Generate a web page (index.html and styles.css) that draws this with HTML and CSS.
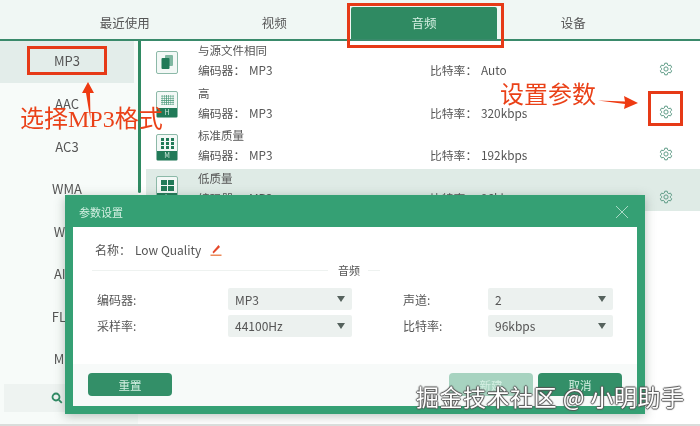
FILE: index.html
```html
<!DOCTYPE html>
<html lang="zh">
<head>
<meta charset="utf-8">
<title>参数设置</title>
<link rel="stylesheet" href="styles.css">
</head>
<body>
<svg width="0" height="0" class="defs">
  <symbol id="gear" viewBox="0 0 14 14">
    <path fill="none" stroke="#5f9c87" stroke-width="1" stroke-linejoin="round" d="M5.8 1.2h2.4l.4 1.7 1.2.7 1.7-.5 1.2 2.1-1.3 1.2v1.2l1.3 1.2-1.2 2.1-1.7-.5-1.2.7-.4 1.7H5.800l-.4-1.7-1.200-.7-1.700.5-1.200-2.100 1.300-1.200V6.400L1.300 5.200l1.200-2.100 1.700.5 1.200-.7z"/>
    <circle cx="7" cy="7" r="2.100" fill="none" stroke="#5f9c87" stroke-width="1"/>
  </symbol>
</svg>
<div class="app">
  <nav class="tabs">
    <div class="tab">最近使用</div>
    <div class="tab">视频</div>
    <div class="tab active">音频</div>
    <div class="tab">设备</div>
  </nav>
  <div class="main">
    <aside class="side">
      <div class="fmt on">MP3</div>
      <div class="fmt">AAC</div>
      <div class="fmt">AC3</div>
      <div class="fmt">WMA</div>
      <div class="fmt">WAV</div>
      <div class="fmt">AIFF</div>
      <div class="fmt">FLAC</div>
      <div class="fmt">MKA</div>
      <div class="search">
        <svg width="12" height="12" viewBox="0 0 12 12"><circle cx="5" cy="5" r="3.500" fill="none" stroke="#2f8a64" stroke-width="1.800"/><path d="M7.800 7.800l3 3" stroke="#2f8a64" stroke-width="1.800"/></svg>
      </div>
    </aside>
    <div class="vbar"></div>
    <section class="list">
      <div class="row">
        <div class="ico"><svg width="16" height="16" viewBox="0 0 16 16"><rect x="6" y="1" width="8" height="11" rx="1" fill="#7fb7a1"/><rect x="2.500" y="4" width="8" height="11" rx="1" fill="#217a58"/></svg></div>
        <div class="txt"><div>与源文件相同</div><div class="kv"><span class="k">编码器：</span><span>MP3</span></div></div>
        <div class="kv rate"><span class="k">比特率：</span><span>Auto</span></div>
        <svg class="gear"><use href="#gear"/></svg>
      </div>
      <div class="row">
        <div class="ico tall"><div class="dots d-hi"></div><div class="q">H</div></div>
        <div class="txt"><div>高</div><div class="kv"><span class="k">编码器：</span><span>MP3</span></div></div>
        <div class="kv rate"><span class="k">比特率：</span><span>320kbps</span></div>
        <svg class="gear"><use href="#gear"/></svg>
      </div>
      <div class="row">
        <div class="ico tall"><div class="dots d-md"></div><div class="q">M</div></div>
        <div class="txt"><div>标准质量</div><div class="kv"><span class="k">编码器：</span><span>MP3</span></div></div>
        <div class="kv rate"><span class="k">比特率：</span><span>192kbps</span></div>
        <svg class="gear"><use href="#gear"/></svg>
      </div>
      <div class="row sel">
        <div class="ico tall"><div class="dots d-lo"></div><div class="q">L</div></div>
        <div class="txt"><div>低质量</div><div class="kv"><span class="k">编码器：</span><span>MP3</span></div></div>
        <div class="kv rate"><span class="k">比特率：</span><span>96kbps</span></div>
        <svg class="gear"><use href="#gear"/></svg>
      </div>
    </section>
  </div>

  <div class="modal">
    <header class="m-head">
      <span>参数设置</span>
      <svg width="14" height="14" viewBox="0 0 14 14"><path d="M1 1l12 12M13 1L1 13" stroke="#a9d9c5" stroke-width="1"/></svg>
    </header>
    <div class="m-body">
      <div class="m-name">
        <span class="k">名称：</span><span>Low Quality</span>
        <svg width="12" height="14" viewBox="0 0 12 14"><path d="M2.500 9l1 1.500L10 4 8.500 2z" fill="#e5482a"/><rect x="0.500" y="11.500" width="11" height="1.500" fill="#ec8a5a"/></svg>
      </div>
      <div class="m-sep"><i></i><span>音频</span><i class="short"></i></div>
      <div class="m-form">
        <span class="k">编码器:</span><div class="pick"><span>MP3</span><b></b></div>
        <span class="k second">声道:</span><div class="pick"><span>2</span><b></b></div>
        <span class="k">采样率:</span><div class="pick"><span>44100Hz</span><b></b></div>
        <span class="k second">比特率:</span><div class="pick"><span>96kbps</span><b></b></div>
      </div>
      <footer class="m-foot">
        <button class="btn">重置</button>
        <button class="btn light push">新建</button>
        <button class="btn">取消</button>
      </footer>
    </div>
  </div>

  <div class="mark m-tab"></div>
  <div class="mark m-mp3"></div>
  <div class="mark m-gear"></div>
  <div class="note n-fmt">选择MP3格式</div>
  <div class="note n-set">设置参数</div>
  <svg class="arrow a-up" width="14" height="38" viewBox="0 0 14 38"><path d="M7 0L13 11 9 11 9.500 38 5 11 1 11z" fill="#ee3a12"/></svg>
  <svg class="arrow a-right" width="40" height="14" viewBox="0 0 40 14"><path d="M0 4.500L27 5.500 26 0 40 7 26 13 27 8z" fill="#ee3a12"/></svg>
  <div class="wm">掘金技术社区 @ 小明助手</div>
</div>
</body>
</html>
```
FILE: styles.css
```css
* { box-sizing: border-box; }
html, body { margin: 0; padding: 0; background: #fff; }
.defs { position: absolute; }
.app {
  position: relative;
  width: 700px;
  height: 426px;
  overflow: hidden;
  background: #fff;
  color: #555;
  font: 12px "Noto Sans CJK SC", "Noto Sans", sans-serif;
  border-bottom: 2px solid #d9dddb;
  filter: blur(.4px);
}
.tabs {
  display: flex;
  height: 41px;
  padding: 7px 0 0 50px;
  background: #f0f7f4;
  border-bottom: 2px solid #3a8a6b;
}
.tab {
  width: 149.500px;
  height: 32px;
  font-size: 12.500px;
  line-height: 32px;
  text-align: center;
}
.tab.active {
  width: 146px;
  margin: 0 1.500px 0 2px;
  background: #2f8a62;
  color: #d5f0e3;
  border-radius: 2px 2px 0 0;
}
.main { display: flex; height: 383px; }
.side {
  display: flex;
  flex-direction: column;
  flex: none;
  width: 138px;
  padding-right: 4px;
  background: #f7fbf9;
}
.fmt {
  display: flex;
  flex: none;
  height: 42.500px;
  padding-bottom: 2px;
  align-items: center;
  justify-content: center;
  font-size: 13px;
}
.fmt.on { height: 41.500px; margin-bottom: 1px; background: #e3edea; }
.search {
  display: flex;
  align-items: center;
  height: 28px;
  margin: 3px 0 0 4px;
  padding-left: 47px;
  background: #eef3f1;
}
.vbar {
  flex: none;
  width: 3px;
  height: 152px;
  background: #2f8a62;
  border-radius: 0 0 2px 2px;
}
.list { flex: 1; padding-left: 5px; }
.row {
  display: flex;
  align-items: center;
  height: 42.500px;
  padding: 0 17px 0 10px;
}
.row.sel { background: #dfebe6; }
.ico {
  display: flex;
  flex: none;
  flex-direction: column;
  align-items: center;
  justify-content: center;
  width: 22px;
  height: 23px;
  border: 1px solid #8cb9a8;
  border-radius: 2px;
  background: #f3f8f6;
}
.ico.tall { justify-content: space-between; height: 27px; padding-top: 3px; }
.d-hi {
  width: 13px;
  height: 10px;
  background-image: radial-gradient(#4d9a7c .7px, transparent .9px);
  background-size: 2.200px 2.200px;
}
.d-md {
  width: 13px;
  height: 11px;
  background-image: repeating-linear-gradient(90deg, #217a58 0 3px, transparent 3px 5px);
  -webkit-mask: repeating-linear-gradient(#000 0 3px, transparent 3px 4px);
  mask: repeating-linear-gradient(#000 0 3px, transparent 3px 4px);
}
.d-lo {
  width: 13px;
  height: 11px;
  background-image: repeating-linear-gradient(90deg, #217a58 0 6px, transparent 6px 7px);
  -webkit-mask: repeating-linear-gradient(#000 0 5px, transparent 5px 6px);
  mask: repeating-linear-gradient(#000 0 5px, transparent 5px 6px);
}
.q {
  width: 100%;
  height: 9px;
  background: #217a58;
  color: #cfe9dd;
  font-size: 7px;
  line-height: 9px;
  text-align: center;
}
.txt {
  flex: none;
  width: 232px;
  margin: 0 0 4px 20px;
  line-height: 19px;
  font-size: 11.500px;
}
.kv { display: flex; font-size: 11.800px; }
.kv .k { width: 51px; }
.rate { flex: none; width: 229px; margin-top: 15px; }
.gear { flex: none; width: 14px; height: 14px; margin-top: 14px; }

.modal {
  position: absolute;
  left: 65px;
  top: 195px;
  display: flex;
  flex-direction: column;
  width: 580px;
  height: 219px;
  padding: 0 8px 8px;
  background: #35a074;
  box-shadow: 0 2px 10px rgba(60, 80, 70, .35);
}
.m-head {
  display: flex;
  flex: none;
  align-items: center;
  justify-content: space-between;
  height: 32px;
  padding: 2px 8px 0 6px;
  color: #d5f0e3;
  font-size: 11px;
}
.m-body {
  display: flex;
  flex: 1;
  flex-direction: column;
  background: #fff;
}
.m-name {
  display: flex;
  align-items: center;
  height: 21px;
  margin-top: 12px;
  padding-left: 22px;
  font-size: 12px;
}
.m-name .k { width: 40px; }
.m-name svg { margin-left: 9px; }
.m-sep {
  display: flex;
  align-items: center;
  height: 16px;
  margin: 2px 0 0 19px;
  font-size: 11px;
}
.m-sep i { width: 236px; height: 1px; background: #eef2f0; }
.m-sep i.short { width: 12px; }
.m-sep span { margin: 0 8px 0 10px; }
.m-form {
  display: grid;
  grid-template-columns: 131px 124px 136px 125px;
  grid-auto-rows: 22px;
  row-gap: 4.500px;
  align-items: center;
  margin-top: 10px;
  padding-left: 24px;
}
.m-form .second { margin-left: 51px; }
.pick {
  display: flex;
  align-items: center;
  justify-content: space-between;
  height: 22px;
  padding: 0 7px;
  background: #ecf1ef;
  border-radius: 2px;
}
.pick b {
  width: 0;
  height: 0;
  border: 4.500px solid transparent;
  border-top: 6px solid #55625d;
  border-bottom: 0;
}
.m-foot {
  display: flex;
  flex: none;
  gap: 5px;
  align-items: center;
  height: 42px;
  margin-top: auto;
  padding: 4px 15px 5px;
  background: #f7faf9;
}
.btn {
  width: 84px;
  height: 23px;
  padding: 0;
  border: 0;
  border-radius: 4px;
  background: #338f68;
  color: #d5f0e3;
  font: 11.500px "Noto Sans CJK SC", sans-serif;
}
.btn.light { background: #a7d3c0; }
.btn.push { margin-left: auto; }

.mark { position: absolute; border: 3px solid #e63a17; }
.m-tab { left: 347px; top: 3px; width: 157px; height: 45px; }
.m-mp3 { left: 27px; top: 46px; width: 80px; height: 29px; }
.m-gear { left: 648px; top: 91px; width: 35px; height: 35px; }
.note {
  position: absolute;
  color: #ea4118;
  font: 24px/28px "Liberation Serif", "Noto Sans CJK SC", serif;
  white-space: nowrap;
}
.n-fmt { left: 20px; top: 105px; }
.n-set { left: 500px; top: 81px; }
.arrow { position: absolute; }
.a-up { left: 81px; top: 82px; }
.a-right { left: 598px; top: 96px; }
.wm {
  position: absolute;
  left: 416px;
  top: 380px;
  color: #fff;
  font-size: 23px;
  line-height: 32px;
  letter-spacing: .5px;
  white-space: nowrap;
  text-shadow: 1px 0 1px #555, -1px 0 1px #555, 0 1px 1px #555, 0 -1px 1px #555;
}
```
